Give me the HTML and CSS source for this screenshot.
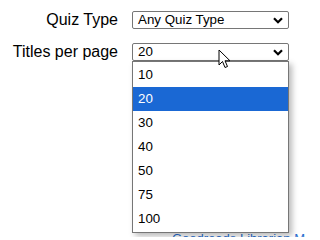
FILE: index.html
```html
<!DOCTYPE html>
<html>
<head>
<meta charset="utf-8">
<link rel="stylesheet" href="styles.css">
</head>
<body>
<div class="page">
  <form class="form">
    <label class="label">Quiz Type</label>
    <div class="select">
      <span class="value">Any Quiz Type</span>
      <svg class="chev" width="10" height="7" viewBox="0 0 10 7"><path d="M1 1.2 L5 5.2 L9 1.2" fill="none" stroke="#000" stroke-width="2.2"/></svg>
    </div>
    <label class="label">Titles per page</label>
    <div class="select open">
      <span class="value">20</span>
      <svg class="chev" width="10" height="7" viewBox="0 0 10 7"><path d="M1 1.2 L5 5.2 L9 1.2" fill="none" stroke="#000" stroke-width="2.2"/></svg>
      <ul class="menu">
        <li class="opt">10</li>
        <li class="opt selected">20</li>
        <li class="opt">30</li>
        <li class="opt">40</li>
        <li class="opt">50</li>
        <li class="opt">75</li>
        <li class="opt">100</li>
      </ul>
    </div>
  </form>
  <p class="footer"><a class="link">Goodreads Librarian Manual</a></p>
  <svg class="cursor" width="14" height="21" viewBox="0 0 14 21"><path d="M1 1 L1 16 L4.5 12.5 L7 18.5 L9.5 17.5 L7 11.8 L12 11.8 Z" fill="#fff" stroke="#000" stroke-width="1" stroke-linejoin="round"/></svg>
</div>
</body>
</html>
```
FILE: styles.css
```css
html, body {
  margin: 0;
  padding: 0;
  background: #ffffff;
}
.page {
  position: relative;
  width: 306px;
  height: 237px;
  overflow: hidden;
  font-family: "Liberation Sans", Arial, sans-serif;
}
.form {
  display: grid;
  grid-template-columns: 118px 157px;
  column-gap: 14px;
  row-gap: 14px;
  padding-top: 11px;
  margin: 0;
}
.label {
  font-size: 16px;
  color: #000;
  text-align: right;
  line-height: 18px;
  align-self: center;
}
.select {
  position: relative;
  box-sizing: border-box;
  height: 18px;
  border: 1px solid #767676;
  border-radius: 2px;
  background: #fff;
  font-size: 13.33px;
  line-height: 16px;
  padding-left: 5px;
  color: #000;
}
.value {
  display: block;
}
.chev {
  position: absolute;
  right: 5px;
  top: 5px;
}
.menu {
  position: absolute;
  left: -1px;
  top: 17px;
  width: 155px;
  margin: 0;
  padding: 1px 0;
  list-style: none;
  background: #fff;
  border: 1px solid #767676;
  box-shadow: 3px 3px 6px rgba(0,0,0,0.28);
  z-index: 2;
}
.opt {
  height: 24px;
  line-height: 24px;
  padding-left: 5px;
  font-size: 13.33px;
  color: #000;
}
.opt.selected {
  background: #1a68d4;
  color: #fff;
}
.footer {
  margin: 0;
  padding-top: 170px;
  padding-left: 172px;
  font-size: 13px;
  line-height: 16px;
  white-space: nowrap;
}
.link {
  color: #2a6fd0;
}
.cursor {
  position: absolute;
  left: 218px;
  top: 49px;
  z-index: 5;
}
```
